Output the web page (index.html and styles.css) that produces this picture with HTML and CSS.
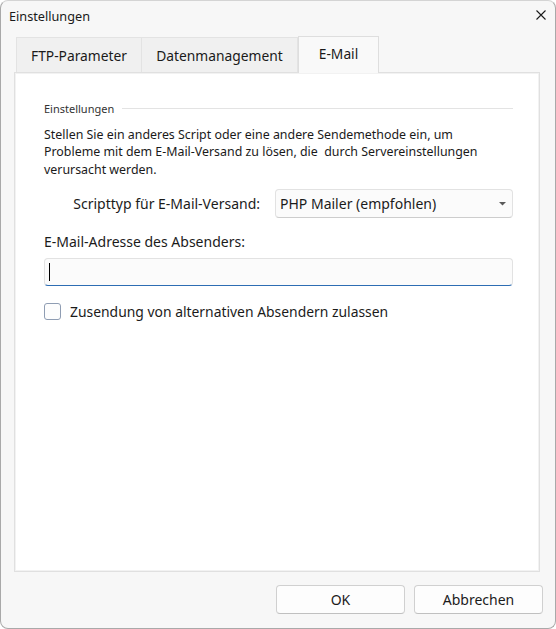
FILE: index.html
```html
<!DOCTYPE html>
<html lang="de">
<head>
<meta charset="utf-8">
<title>Einstellungen</title>
<link rel="stylesheet" href="styles.css">
</head>
<body>
<div class="window">
  <div class="titlebar">
    <span class="title">Einstellungen</span>
    <svg class="close" width="10" height="10" viewBox="0 0 10 10"><path d="M0.5 0.5 L9.5 9.5 M9.5 0.5 L0.5 9.5" stroke="#1a1a1a" stroke-width="1.1" fill="none"/></svg>
  </div>
  <div class="tabs">
    <div class="tab tab-ftp">FTP-Parameter</div>
    <div class="tab tab-daten">Datenmanagement</div>
    <div class="tab tab-active">E-Mail</div>
  </div>
  <div class="panel">
    <div class="group-head">
      <span class="group-title">Einstellungen</span>
      <span class="group-line"></span>
    </div>
    <p class="desc">Stellen Sie ein anderes Script oder eine andere Sendemethode ein, um Probleme mit dem E-Mail-Versand zu lösen, die&nbsp; durch Servereinstellungen verursacht werden.</p>
    <div class="combo-row">
      <span class="combo-label">Scripttyp für E-Mail-Versand:</span>
      <div class="combo">
        <span>PHP Mailer (empfohlen)</span>
        <svg class="arrow" width="7" height="4" viewBox="0 0 7 4"><path d="M0 0 H7 L3.5 3.6 Z" fill="#5a5a5a"/></svg>
      </div>
    </div>
    <div class="field-label">E-Mail-Adresse des Absenders:</div>
    <div class="input"><span class="caret"></span></div>
    <div class="check-row">
      <span class="checkbox"></span>
      <span class="check-label">Zusendung von alternativen Absendern zulassen</span>
    </div>
  </div>
  <div class="footer">
    <div class="btn">OK</div>
    <div class="btn">Abbrechen</div>
  </div>
</div>
</body>
</html>
```
FILE: styles.css
```css
html, body {
  margin: 0;
  padding: 0;
  background: #ffffff;
}
body {
  font-family: "Noto Sans", "Open Sans", sans-serif;
  color: #1b1b1b;
}
.window {
  box-sizing: border-box;
  width: 556px;
  height: 629px;
  border: 1px solid #a9a9a9;
  border-top-color: #d4d4d4;
  border-radius: 8px;
  background: #f7f7f7;
  display: flex;
  flex-direction: column;
  overflow: hidden;
}
.titlebar {
  height: 30px;
  display: flex;
  align-items: center;
  justify-content: space-between;
  padding: 0 9px 0 8px;
}
.title {
  font-size: 12.7px;
  color: #1a1a1a;
}
.close {
  display: block;
  align-self: flex-start;
  margin-top: 9px;
}
.tabs {
  margin-top: 5px;
  padding-left: 15px;
  display: flex;
  align-items: flex-end;
  height: 36px;
  position: relative;
  z-index: 2;
}
.tab {
  box-sizing: border-box;
  height: 35px;
  display: flex;
  align-items: center;
  justify-content: center;
  font-size: 13.8px;
  background: #f0f0f0;
  border: 1px solid #e3e3e3;
  border-bottom: none;
  color: #1a1a1a;
}
.tab-ftp { width: 126px; }
.tab-daten { width: 156px; border-left: none; }
.tab-active {
  width: 81px;
  height: 37px;
  margin-bottom: -1px;
  background: #f9f9f9;
  border: 1px solid #dedede;
  border-bottom: none;
  padding-bottom: 3px;
}
.panel {
  box-sizing: border-box;
  margin-left: 13px;
  width: 526px;
  height: 500px;
  background: #ffffff;
  border: 1px solid #e0e0e0;
  box-shadow: inset 0 0 0 1px #f2f2f2;
  padding: 28px 26px 0 29px;
  display: flex;
  flex-direction: column;
}
.group-head {
  display: flex;
  align-items: center;
  height: 14px;
}
.group-title {
  font-size: 11px;
  color: #333;
  margin-right: 8px;
}
.group-line {
  flex: 1;
  height: 1px;
  background: #e3e3e3;
}
.desc {
  margin: 11px 0 0 0;
  max-width: 450px;
  font-size: 12.4px;
  line-height: 17.35px;
  color: #1a1a1a;
}
.combo-row {
  margin-top: 11px;
  display: flex;
  align-items: center;
}
.combo-label {
  flex: 1;
  text-align: right;
  font-size: 14px;
  margin-right: 15px;
}
.combo {
  box-sizing: border-box;
  width: 238px;
  height: 29px;
  border: 1px solid #e2e2e2;
  border-bottom-color: #cdcdcd;
  border-radius: 4px;
  background: #fbfbfb;
  display: flex;
  align-items: center;
  justify-content: space-between;
  padding: 0 6px 0 4px;
  font-size: 14px;
}
.field-label {
  margin-top: 15px;
  font-size: 14px;
  line-height: 18px;
}
.input {
  box-sizing: border-box;
  margin-top: 7px;
  height: 28px;
  border: 1px solid #e2e2e2;
  border-bottom: 1px solid #2d6db3;
  border-radius: 4px;
  background: #fbfbfb;
  display: flex;
  align-items: center;
  padding-left: 4px;
}
.caret {
  width: 1px;
  height: 18px;
  background: #000;
  margin-top: -1px;
}
.check-row {
  margin-top: 16px;
  display: flex;
  align-items: center;
}
.checkbox {
  box-sizing: border-box;
  width: 17px;
  height: 17px;
  border: 1px solid #8f9db3;
  border-radius: 3px;
  background: #fdfdfd;
  margin-right: 9px;
}
.check-label {
  font-size: 13.9px;
}
.footer {
  flex: 1;
  display: flex;
  justify-content: flex-end;
  align-items: flex-start;
  gap: 9px;
  padding: 13px 12px 0 0;
}
.btn {
  box-sizing: border-box;
  width: 129px;
  height: 29px;
  border: 1px solid #d0d0d0;
  border-bottom-color: #c0c0c0;
  border-radius: 4px;
  background: #fdfdfd;
  display: flex;
  align-items: center;
  justify-content: center;
  font-size: 14px;
}
```
